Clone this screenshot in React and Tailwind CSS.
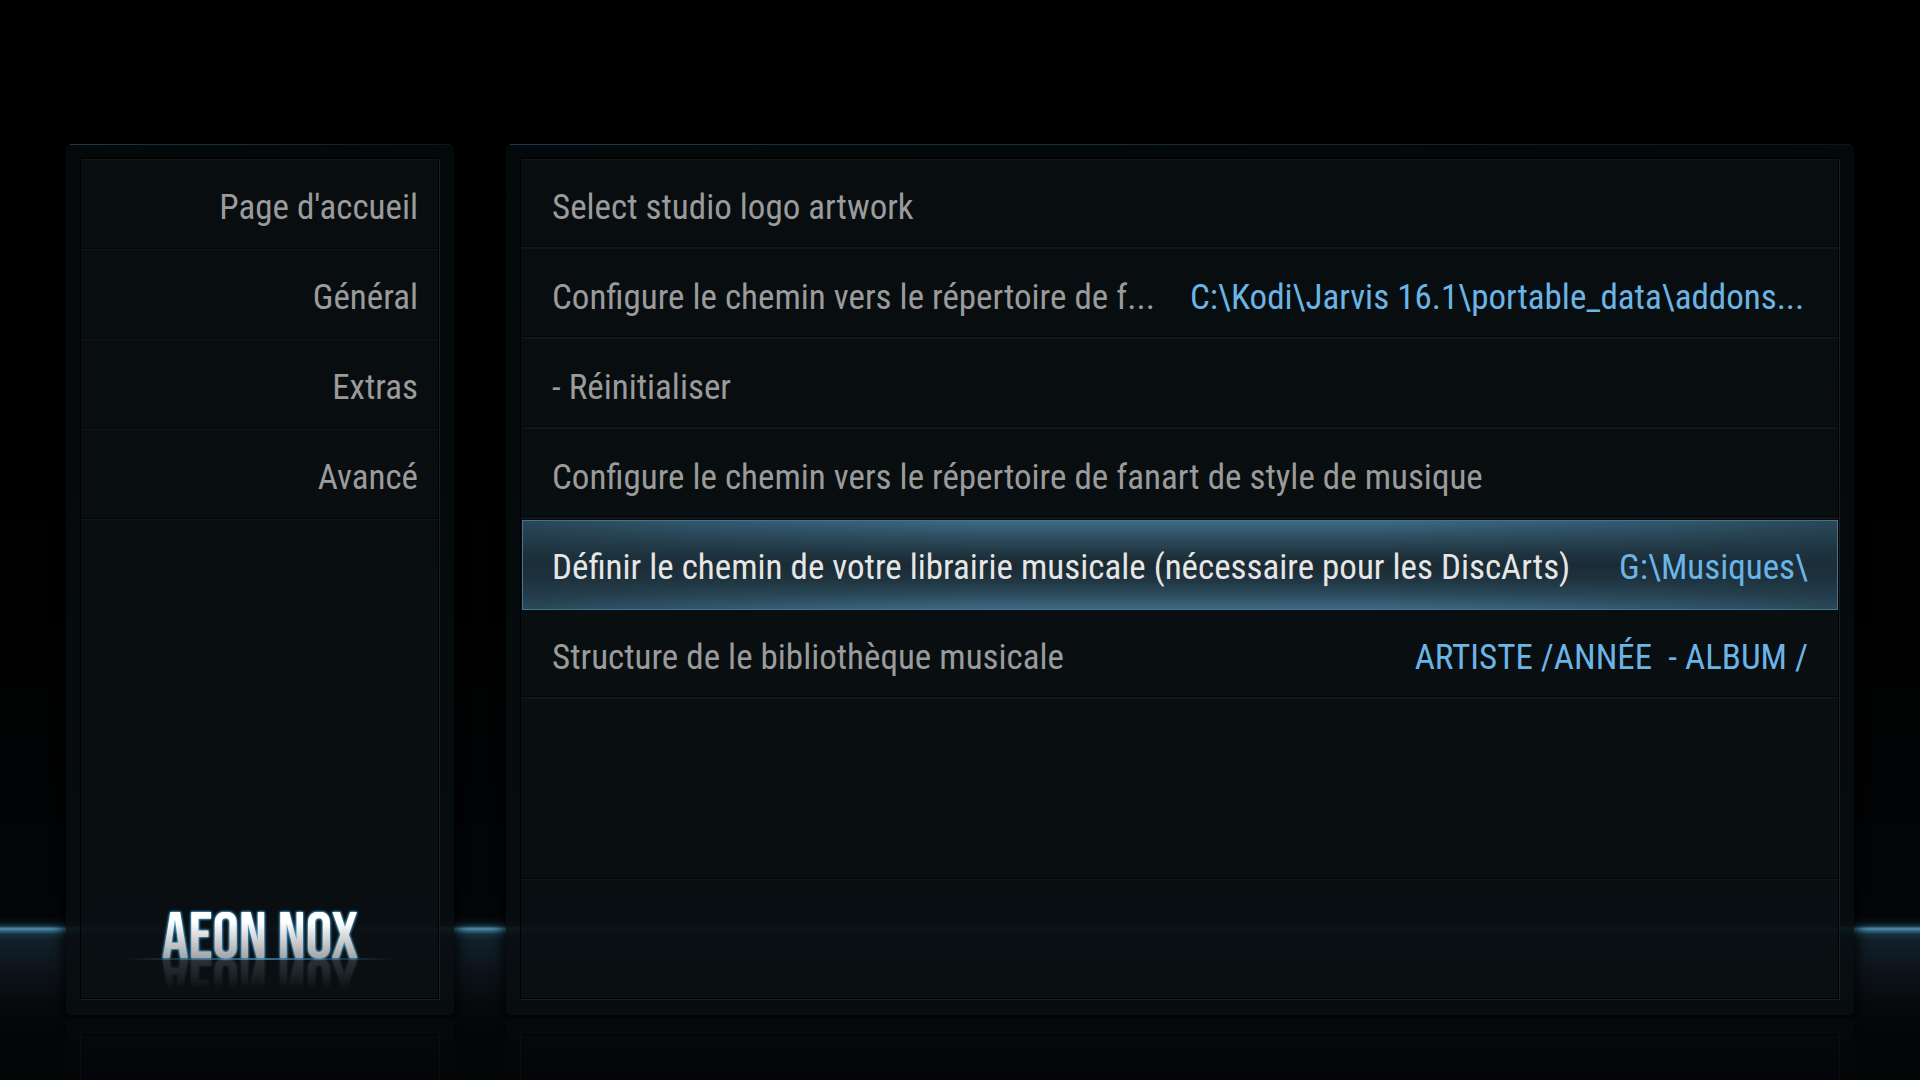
const categories = ["Page d'accueil", "Général", "Extras", "Avancé"];

const settings = [
  { label: "Select studio logo artwork" },
  {
    label: "Configure le chemin vers le répertoire de f...",
    value: "C:\\Kodi\\Jarvis 16.1\\portable_data\\addons...",
    wide: true,
  },
  { label: "- Réinitialiser" },
  { label: "Configure le chemin vers le répertoire de fanart de style de musique" },
  {
    label: "Définir le chemin de votre librairie musicale (nécessaire pour les DiscArts)",
    value: "G:\\Musiques\\",
    active: true,
  },
  { label: "Structure de le bibliothèque musicale", value: "ARTISTE /ANNÉE  - ALBUM /" },
];

function Panel({ as: Tag = "section", label, children }) {
  return (
    <Tag
      aria-label={label}
      className="flex min-w-0 flex-col rounded-[5px] bg-linear-to-b from-[#04090b]/90 to-[#080d10]/90 shadow-[0_0_14px_2px_#000]"
    >
      <div className="mx-1 h-px bg-linear-to-r from-[#1c3748] via-[#162c39] to-[#0b161b]" />
      <div className="mt-[13px] mr-[15px] mb-4 ml-[14px] flex flex-1 flex-col border border-black bg-[#0b1014]/60 shadow-[1px_1px_0_#182025]">
        <div className="h-px bg-[#12191d]" />
        <div className="flex flex-1 flex-col pl-px">{children}</div>
      </div>
    </Tag>
  );
}

function CategoryRow({ name }) {
  return (
    <li>
      <button type="button" className="flex h-[88px] w-full items-center justify-end pt-2 pr-5 text-[#9b9b9b]">
        {name}
      </button>
      <div className="h-px bg-[#030506]" />
      <div className="h-px bg-[#10181c]" />
    </li>
  );
}

function SettingRow({ label, value, active, wide }) {
  return (
    <li className="h-[90px]">
      <button
        type="button"
        className={
          "flex w-full items-center justify-between whitespace-pre " +
          (active
            ? "h-[90px] border border-[#42738f] bg-[linear-gradient(to_right,#1c303c99_0%,#1c303c4d_14%,transparent_35%,transparent_65%,#1c303c4d_86%,#1c303c99_100%),linear-gradient(to_bottom,#3d6a84_0%,#2d4c5e_20%,#1f343f_38%,#1a2a33_50%,#1f343f_66%,#2d4c5e_84%,#3d6a84_100%)] px-[29px] pt-1.5 text-[#e6e6e6]"
            : "h-[86px] px-[30px] pt-2.5 text-[#9b9b9b]")
        }
      >
        <span>{label}</span>
        {value && <span className={wide ? "min-w-[618px] text-left text-[#6bb5e6]" : "text-[#6bb5e6]"}>{value}</span>}
      </button>
      {!active && (
        <>
          <div className="h-px bg-[#030506]" />
          <div className="h-[2px] bg-linear-to-b from-[#131b20] to-[#0d1418]" />
        </>
      )}
    </li>
  );
}

function Logo() {
  return (
    <div className="flex flex-col items-center font-['Bebas_Neue','Roboto_Condensed',sans-serif] text-[66px] leading-[46px]">
      <div className="h-[46px] [-webkit-box-reflect:below_1px_linear-gradient(transparent_35%,rgba(255,255,255,0.22))]">
        <div className="drop-shadow-[0_0_1px_#45a0d6]">
          <span className="block bg-linear-to-b from-white from-20% to-[#9a9a9a] bg-clip-text pt-1 text-transparent drop-shadow-[0_0_1px_#45a0d6]">
            AEON NOX
          </span>
        </div>
      </div>
      <div className="h-[2px] w-[270px] bg-linear-to-r from-transparent via-[#3a6f8c] to-transparent" />
    </div>
  );
}

function Reflection() {
  return (
    <div className="flex flex-col rounded-t-[5px] bg-linear-to-b from-[#06090c] to-[#030506] pt-[14px] pr-[14px] pl-[14px]">
      <div className="flex-1 border border-b-0 border-[#090e14] bg-linear-to-b from-[#05090c] to-[#030508] shadow-[inset_0_1px_0_#000]" />
    </div>
  );
}

export default function App() {
  return (
    <div className="flex min-h-screen flex-col bg-[linear-gradient(to_top,#020607_0px,#020607_48px,#060a0d_75px,#0d1319_108px,#10202a_140px,#18323f_146px,#3b7592_150px,#4f8fb0_151px,#3b7592_152px,#122f3d_154px,#060f14_158px,#030508_164px,#020304_300px,#000_600px)] px-[66px] pt-36 font-['Roboto_Condensed',Roboto,sans-serif] text-[35px] leading-[42px]">
      <main className="grid flex-1 grid-cols-[388fr_1348fr] gap-[52px]">
        <Panel as="nav" label="Catégories">
          <ul>
            {categories.map((name) => (
              <CategoryRow key={name} name={name} />
            ))}
          </ul>
          <div className="mt-auto h-[86px]">
            <Logo />
          </div>
        </Panel>
        <Panel label="Réglages">
          <ul className="flex-1">
            {settings.map((item) => (
              <SettingRow key={item.label} {...item} />
            ))}
          </ul>
          <div className="h-[120px]">
            <div className="h-px bg-[#030506]" />
            <div className="h-px bg-[#10181c]" />
          </div>
        </Panel>
      </main>
      <div aria-hidden="true" className="mt-1 grid h-[61px] grid-cols-[388fr_1348fr] gap-[52px]">
        <Reflection />
        <Reflection />
      </div>
    </div>
  );
}
